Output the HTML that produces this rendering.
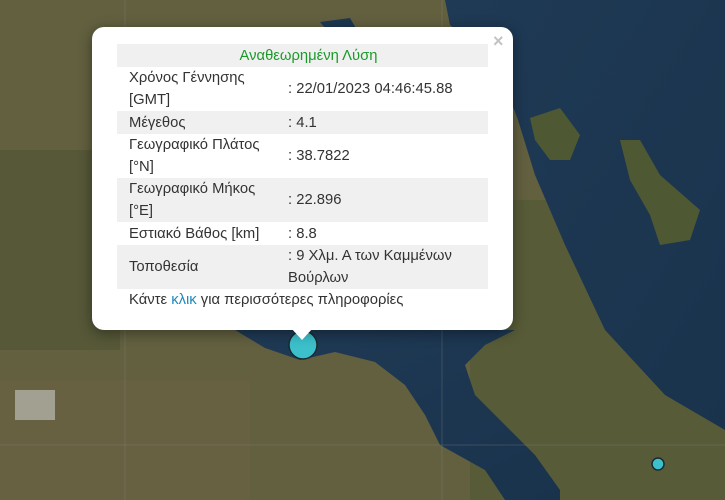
<!DOCTYPE html>
<html><head><meta charset="utf-8"><style>
body{margin:0;width:725px;height:500px;overflow:hidden;position:relative;font-family:"Liberation Sans",sans-serif;background:#5e5a3e}
svg.map{position:absolute;left:0;top:0}
.pop{position:absolute;left:92px;top:27px;width:421px;height:303px;background:#fff;border-radius:12px;box-shadow:0 3px 14px rgba(0,0,0,.4)}
.tip{position:absolute;left:291px;top:328px;width:0;height:0;border-left:11px solid transparent;border-right:11px solid transparent;border-top:12px solid #fff}
.x{position:absolute;left:493px;top:31px;color:#c3c3c3;font:bold 18px "Liberation Sans",sans-serif}
table{position:absolute;left:117px;top:44px;width:371px;border-collapse:collapse;font-size:14.8px;color:#333}
td{padding:0 0 0 12px;line-height:22px;vertical-align:middle}
td.v{padding-left:0;width:200px}
tr.g{background:#f0f0f0}
.h{text-align:center;color:#1b9a2a;height:23px}
.more{position:absolute;left:129px;top:292px;font-size:14.8px;color:#333}
.more span{color:#1f8ac0}
</style></head><body>
<svg class="map" width="725" height="500">
<defs>
<linearGradient id="s" x1="0" y1="0" x2="1" y2="1"><stop offset="0" stop-color="#1f3a55"/><stop offset="1" stop-color="#1a334d"/></linearGradient>
</defs>
<rect width="725" height="500" fill="#62603f"/>
<rect x="0" y="150" width="120" height="200" fill="#4f5433" opacity=".6"/>
<rect x="0" y="380" width="250" height="120" fill="#6a6244" opacity=".7"/>
<rect x="470" y="200" width="255" height="300" fill="#4b5530" opacity=".5"/>
<polygon fill="url(#s)" points="445,0 725,0 725,430 665,395 605,330 565,245 535,175 518,120 503,80 475,45 450,25"/>
<polygon fill="url(#s)" points="235,330 515,330 485,345 465,365 475,395 505,425 535,455 560,490 560,500 505,500 485,470 440,445 425,415 405,385 375,362 335,352 300,360 265,348"/>
<polygon fill="url(#s)" points="320,22 350,18 360,35 335,40"/>
<polygon fill="#4e5933" points="530,118 560,108 580,135 570,160 550,160 535,140"/>
<polygon fill="#4e5933" points="620,140 640,140 660,175 700,210 690,240 660,245 650,215 630,180"/>
<rect x="15" y="390" width="40" height="30" fill="#c9c9c6" opacity=".6"/>
<line x1="0" y1="445" x2="725" y2="445" stroke="#888" stroke-width="1" opacity=".3"/>
<line x1="125" y1="0" x2="125" y2="500" stroke="#888" stroke-width="1" opacity=".3"/>
<line x1="442" y1="0" x2="442" y2="500" stroke="#888" stroke-width="1" opacity=".3"/>
<circle cx="303" cy="345" r="14" fill="#3cc0cc" stroke="#1a2a30" stroke-width="1.5"/>
<circle cx="658" cy="464" r="6" fill="#3cc0cc" stroke="#1a2a30" stroke-width="1.5"/>
</svg>
<div class="pop"></div>
<div class="tip"></div>
<div class="x">×</div>
<table>
<tr class="g"><td colspan="2" class="h">Αναθεωρημένη Λύση</td></tr>
<tr style="height:44px"><td>Χρόνος Γέννησης<br>[GMT]</td><td class="v">: 22/01/2023 04:46:45.88</td></tr>
<tr class="g" style="height:23px"><td>Μέγεθος</td><td class="v">: 4.1</td></tr>
<tr style="height:44px"><td>Γεωγραφικό Πλάτος<br>[°N]</td><td class="v">: 38.7822</td></tr>
<tr class="g" style="height:44px"><td>Γεωγραφικό Μήκος<br>[°E]</td><td class="v">: 22.896</td></tr>
<tr style="height:23px"><td>Εστιακό Βάθος [km]</td><td class="v">: 8.8</td></tr>
<tr class="g" style="height:44px"><td>Τοποθεσία</td><td class="v">: 9 Χλμ. Α των Καμμένων<br>Βούρλων</td></tr>
</table>
<div class="more">Κάντε <span>κλικ</span> για περισσότερες πληροφορίες</div>
</body></html>
